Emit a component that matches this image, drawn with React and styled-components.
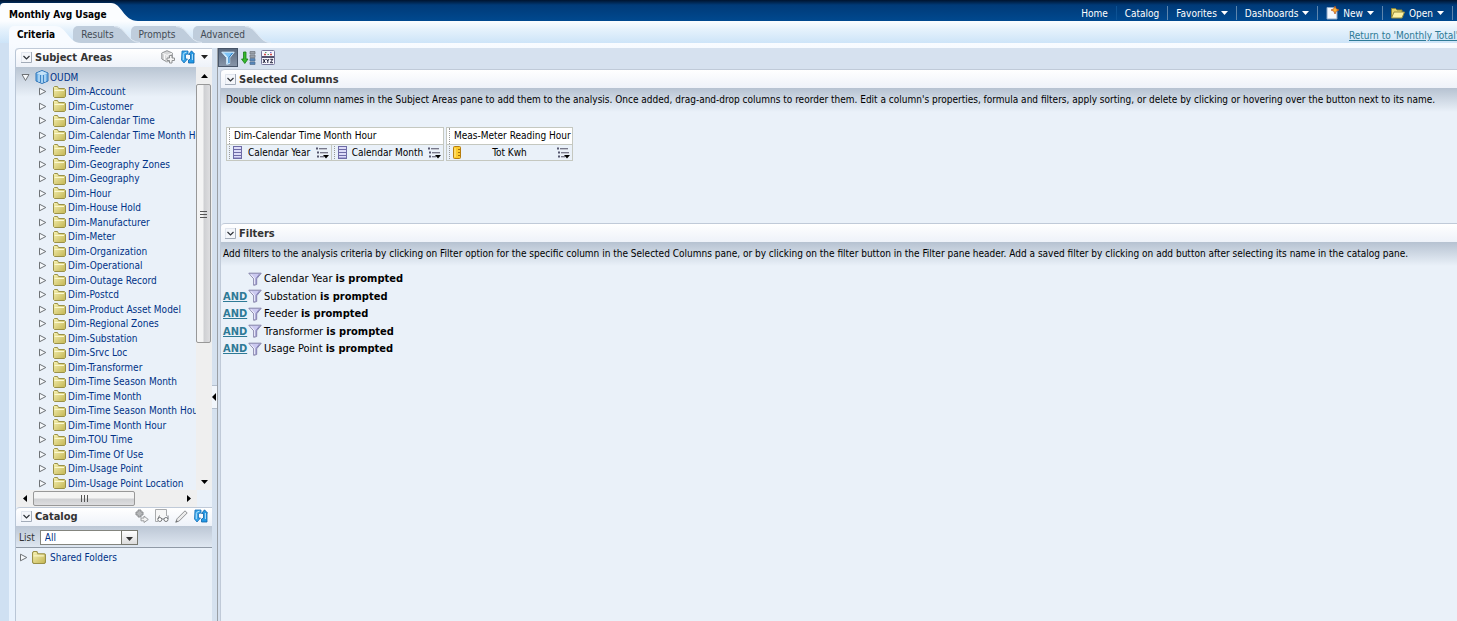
import { useState } from "react";
import styled, { createGlobalStyle, css } from "styled-components";

const dimensions = [
  "Dim-Account",
  "Dim-Customer",
  "Dim-Calendar Time",
  "Dim-Calendar Time Month Hour",
  "Dim-Feeder",
  "Dim-Geography Zones",
  "Dim-Geography",
  "Dim-Hour",
  "Dim-House Hold",
  "Dim-Manufacturer",
  "Dim-Meter",
  "Dim-Organization",
  "Dim-Operational",
  "Dim-Outage Record",
  "Dim-Postcd",
  "Dim-Product Asset Model",
  "Dim-Regional Zones",
  "Dim-Substation",
  "Dim-Srvc Loc",
  "Dim-Transformer",
  "Dim-Time Season Month",
  "Dim-Time Month",
  "Dim-Time Season Month Hour",
  "Dim-Time Month Hour",
  "Dim-TOU Time",
  "Dim-Time Of Use",
  "Dim-Usage Point",
  "Dim-Usage Point Location",
];

const filters = ["Calendar Year", "Substation", "Feeder", "Transformer", "Usage Point"];

const tabs = ["Criteria", "Results", "Prompts", "Advanced"];

function FolderIcon({ size = 13 }) {
  return (
    <svg width={size} height={size - 1} viewBox="0 0 13 12" aria-hidden="true">
      <defs>
        <linearGradient id="folder" x1="0" y1="0" x2="1" y2="1">
          <stop offset="0" stopColor="#f8f3b4" />
          <stop offset="1" stopColor="#c2b452" />
        </linearGradient>
      </defs>
      <path d="M0.5 10.5V1.5L1.5 0.5H4.5L5.5 2.5H11.5L12.5 3.5V10.5L11.5 11.5H1.5Z" fill="url(#folder)" stroke="#9a9148" />
      <path d="M1.5 4.5H11" stroke="#fbf8d0" />
    </svg>
  );
}

function Twisty({ open }) {
  return (
    <svg width="9" height="9" viewBox="0 0 9 9" aria-hidden="true">
      <path d={open ? "M1 1.5H8L4.5 7.5Z" : "M1.5 1.2V7.8L7.8 4.5Z"} fill="#f6f9fc" stroke="#6e7276" />
    </svg>
  );
}

function CubeIcon() {
  return (
    <svg width="14" height="14" viewBox="0 0 14 14" aria-hidden="true">
      <path d="M7 0.5L13 3V11L7 13.5L1 11V3Z" fill="#6fb0e6" stroke="#2f75b8" />
      <path d="M7 1L12.5 3.2L7 5.5L1.5 3.2Z" fill="#c4e2f8" />
      <path d="M7 5.5V13M4 4.5V12M10 4.5V12" stroke="#e0f1fd" />
      <path d="M5.5 5V12.5M8.5 5V12.5" stroke="#3e86c6" />
    </svg>
  );
}

function RefreshIcon() {
  return (
    <svg width="14" height="14" viewBox="0 0 14 14" aria-hidden="true">
      <path d="M1 1H7V4L4.5 4.5V9H6.5L3 13L0.5 10Z" fill="#35a4ea" stroke="#1670b8" strokeWidth="0.8" />
      <path d="M7.5 13H13V4H13.5L10.5 0.8L7.5 4.5H9.5V9L7.5 10Z" fill="#249ae6" stroke="#0d62a8" strokeWidth="0.8" />
      <path d="M2.3 10V4.5Q2.6 2.5 5.6 2.2M11.4 4V10" stroke="#b7e4fc" fill="none" />
    </svg>
  );
}

function AddSubjectIcon() {
  return (
    <svg width="14" height="14" viewBox="0 0 14 14" aria-hidden="true">
      <path d="M6 0.7L11.3 3V9L6 12L0.8 9V3Z" fill="#d7d8d9" stroke="#929496" />
      <path d="M1.5 3.3L6 5.4L11 3.2M6 5.4V11.5M3.5 4.5V10" stroke="#f9f9f9" fill="none" />
      <path d="M8.5 5.5H11V8H13.5V10.5H11V13H8.5V10.5H6V8H8.5Z" fill="#f4f4f4" stroke="#8e9092" />
    </svg>
  );
}

function FunnelIcon({ light }) {
  return (
    <svg width="14" height="14" viewBox="0 0 14 14" aria-hidden="true">
      <path
        d="M0.8 1.2H13.2L8.7 6.8V12.5L5.7 13.3V6.8Z"
        fill={light ? "#7cc3f6" : "#cbc9f0"}
        stroke={light ? "#d5eeff" : "#8583a8"}
      />
      <path d="M2.8 2.3L6.8 6.8V12" stroke={light ? "#e8f7ff" : "#f8f7ff"} fill="none" />
      <path d="M11.5 2L8 6.5V12" stroke={light ? "#2676bf" : "#8985bd"} fill="none" />
    </svg>
  );
}

function SortIcon() {
  return (
    <svg width="15" height="14" viewBox="0 0 15 14" aria-hidden="true">
      <path d="M2.5 1V8H0.5L3.8 12.5L7 8H5V1Z" fill="#35b82c" stroke="#167d18" strokeWidth="0.8" />
      <path d="M9 0.5H14V3H9ZM9 4H14V6.5H9Z" fill="#9aa1aa" stroke="#6d747d" strokeWidth="0.7" />
      <path d="M9 7.5H14V10H9ZM9 11H14V13.5H9Z" fill="#5586bd" stroke="#54708d" strokeWidth="0.7" />
    </svg>
  );
}

function FormulaIcon() {
  return (
    <svg width="14" height="15" viewBox="0 0 14 15" aria-hidden="true">
      <rect x="0.5" y="0.5" width="13" height="14" rx="1" fill="#f7f6fd" stroke="#77769a" />
      <path d="M3 4.5H5M9 4.5H11" stroke="#ce4a4a" strokeWidth="1.5" />
      <path d="M4 2.5H5.5M6.5 4.5H8" stroke="#5c9e6b" />
      <path d="M9 2.5H10.5" stroke="#7a76c8" />
      <path d="M1 7H13" stroke="#55536f" strokeWidth="2" />
      <path d="M2 9L4.4 13M4.4 9L2 13M5.5 9L6.8 11L8 9M6.8 11V13M9.3 9.3H11.8L9.3 12.7H12" stroke="#23233c" fill="none" />
    </svg>
  );
}

function CollapseIcon() {
  return (
    <svg width="11" height="11" viewBox="0 0 11 11" aria-hidden="true">
      <rect width="11" height="11" fill="#f4f6fa" />
      <path d="M0 10.5H10.5V0" stroke="#a2abb8" fill="none" />
      <path d="M0.5 10V0.5H10" stroke="#e1e6ee" fill="none" />
      <path d="M2.5 4L5.5 7L8.5 4" stroke="#2e3238" fill="none" strokeWidth="1.2" />
    </svg>
  );
}

function Caret() {
  return (
    <svg width="7" height="4" viewBox="0 0 7 4" aria-hidden="true">
      <path d="M0 0H7L3.5 4Z" fill="currentColor" />
    </svg>
  );
}

function AttributeIcon({ measure }) {
  return measure ? (
    <svg width="9" height="13" viewBox="0 0 9 13" aria-hidden="true">
      <rect x="0.5" y="0.5" width="7" height="12" rx="1" fill="#fccb2e" stroke="#b67d0e" />
      <path d="M2 2V11" stroke="#ffec9c" />
      <path d="M5 3.5H7M5 6.5H7M5 9.5H7" stroke="#a66f08" />
    </svg>
  ) : (
    <svg width="9" height="13" viewBox="0 0 9 13" aria-hidden="true">
      <rect x="0.5" y="0.5" width="8" height="12" fill="#dddcf8" stroke="#6e6ba6" />
      <path d="M1 3.5H8M1 6.5H8M1 9.5H8" stroke="#6e6ba6" />
      <path d="M1 11.5H8" stroke="#aaa7d8" />
    </svg>
  );
}

function OptionsIcon() {
  return (
    <svg width="13" height="12" viewBox="0 0 13 12" aria-hidden="true">
      <path d="M0 1.5H2M1 5.5H3M1 9.5H3" stroke="#55566e" strokeWidth="2" />
      <path d="M3 1.5H11M4 5.5H12M4 9.5H8" stroke="#77788a" strokeWidth="1" />
      <path d="M3 2.5H11M4 6.5H12M4 10.5H8" stroke="#c3c6d0" strokeWidth="1" />
      <path d="M7 8H13L10 11.5Z" fill="#000" />
    </svg>
  );
}

function NewIcon() {
  return (
    <svg width="13" height="14" viewBox="0 0 13 14" aria-hidden="true">
      <path d="M1 1.5H8L11 4.5V13H1Z" fill="#f4f8fd" stroke="#8aa7c8" />
      <path d="M9 0L10.2 2.8L13 4L10.2 5.2L9 8L7.8 5.2L5 4L7.8 2.8Z" fill="#ffb733" stroke="#b34c1c" strokeWidth="0.7" />
    </svg>
  );
}

function OpenIcon() {
  return (
    <svg width="14" height="12" viewBox="0 0 14 12" aria-hidden="true">
      <path d="M0.5 10.5V1.5H4.5L6 3H11V5" fill="#e5d66e" stroke="#8d8437" />
      <path d="M0.5 11L3 5H13.5L11 11Z" fill="#fbf2a4" stroke="#978c3c" />
    </svg>
  );
}

function AddItemIcon() {
  return (
    <svg width="14" height="14" viewBox="0 0 14 14" aria-hidden="true">
      <path d="M3 1H6V3H8V6H6V8H3V6H1V3H3Z" fill="#b5b7b9" stroke="#8b8d90" />
      <path d="M6 9H9V7L13.3 10.5L9 13.5V11.8H6Z" fill="#f3f3f3" stroke="#9a9c9e" />
    </svg>
  );
}

function PreviewIcon() {
  return (
    <svg width="14" height="14" viewBox="0 0 14 14" aria-hidden="true">
      <path d="M0.5 12.5V0.5H11.5V7M0.5 12.5H3" fill="#f7f7f7" stroke="#a9abad" />
      <circle cx="4.8" cy="10.5" r="2" fill="#fff" stroke="#77797c" />
      <circle cx="11" cy="10.5" r="2" fill="#fff" stroke="#77797c" />
      <path d="M6.8 10H9M3 10L4.5 6.5M13 10V6.5" stroke="#77797c" fill="none" />
    </svg>
  );
}

function PencilIcon() {
  return (
    <svg width="13" height="13" viewBox="0 0 13 13" aria-hidden="true">
      <path d="M0.8 12.2L2 8.8L10 0.8L12.2 3L4.2 11Z" fill="#ececec" stroke="#8f9193" />
      <path d="M0.5 12.5L3 11.5L1.5 10Z" fill="#707274" />
    </svg>
  );
}

function Section({ title, actions }) {
  return (
    <SectionHeader>
      <IconButton aria-label={`Collapse ${title}`}>
        <CollapseIcon />
      </IconButton>
      <h2>{title}</h2>
      {actions && <Actions>{actions}</Actions>}
    </SectionHeader>
  );
}

function Column({ name, width, measure }) {
  return (
    <ColumnCell $width={width}>
      <AttributeIcon measure={measure} />
      <span>{name}</span>
      <IconButton aria-label={`${name} options`}>
        <OptionsIcon />
      </IconButton>
    </ColumnCell>
  );
}

function App() {
  const [activeTab, setActiveTab] = useState("Criteria");
  const [list, setList] = useState("All");

  return (
    <Page>
      <GlobalStyle />
      <TopBar>
        <DocTitle>
          Monthly Avg Usage
          <svg width="27" height="18" viewBox="0 0 27 18" aria-hidden="true">
            <path d="M0 0C11 0 12 18 27 18H0Z" fill="#fbfdff" />
          </svg>
        </DocTitle>
        <Nav>
          <a href="#home">Home</a>
          <a href="#catalog">Catalog</a>
          <a href="#favorites">Favorites <Caret /></a>
          <a href="#dashboards">Dashboards <Caret /></a>
          <a href="#new"><NewIcon /> New <Caret /></a>
          <a href="#open"><OpenIcon /> Open <Caret /></a>
        </Nav>
      </TopBar>

      <TabBar>
        {tabs.map((tab) => (
          <Tab key={tab} $active={tab === activeTab} onClick={() => setActiveTab(tab)}>
            {tab}
            <svg width="26" height="17" viewBox="0 0 26 17" aria-hidden="true">
              <path d="M0 0C12 0 13 17 26 17H0Z" fill={tab === activeTab ? "#f8fbff" : "#bfcddc"} />
              {tab !== activeTab && <path d="M0 0.5C12 0.5 13 16.5 26 16.5" fill="none" stroke="#dfe8f2" />}
            </svg>
          </Tab>
        ))}
        <ReturnLink href="#return">Return to 'Monthly Total'</ReturnLink>
      </TabBar>

      <Frame>
        <Sidebar>
          <Section
            title="Subject Areas"
            actions={
              <>
                <IconButton aria-label="Add subject area"><AddSubjectIcon /></IconButton>
                <IconButton aria-label="Refresh subject areas"><RefreshIcon /></IconButton>
                <IconButton aria-label="More"><Caret /></IconButton>
              </>
            }
          />
          <TreePane>
            <Tree>
              <TreeRow $root>
                <IconButton aria-label="Collapse OUDM"><Twisty open /></IconButton>
                <CubeIcon />
                <span>OUDM</span>
              </TreeRow>
              {dimensions.map((name) => (
                <TreeRow key={name}>
                  <IconButton aria-label={`Expand ${name}`}><Twisty /></IconButton>
                  <FolderIcon />
                  <span>{name}</span>
                </TreeRow>
              ))}
            </Tree>
            <ScrollBar>
              <ScrollArrow aria-label="Scroll up"><svg width="7" height="4"><path d="M0 4H7L3.5 0Z" /></svg></ScrollArrow>
              <ScrollThumb><i /><i /><i /></ScrollThumb>
              <ScrollArrow aria-label="Scroll down"><svg width="7" height="4"><path d="M0 0H7L3.5 4Z" /></svg></ScrollArrow>
            </ScrollBar>
          </TreePane>
          <ScrollBar $horizontal>
            <ScrollArrow aria-label="Scroll left"><svg width="4" height="7"><path d="M4 0V7L0 3.5Z" /></svg></ScrollArrow>
            <ScrollThumb $horizontal><i /><i /><i /></ScrollThumb>
            <ScrollArrow aria-label="Scroll right"><svg width="4" height="7"><path d="M0 0V7L4 3.5Z" /></svg></ScrollArrow>
          </ScrollBar>

          <Section
            title="Catalog"
            actions={
              <>
                <IconButton aria-label="Add"><AddItemIcon /></IconButton>
                <IconButton aria-label="Preview"><PreviewIcon /></IconButton>
                <IconButton aria-label="Edit"><PencilIcon /></IconButton>
                <IconButton aria-label="Refresh catalog"><RefreshIcon /></IconButton>
              </>
            }
          />
          <ListBar>
            <label htmlFor="list">List</label>
            <SelectBox>
              <select id="list" value={list} onChange={(e) => setList(e.target.value)}>
                <option>All</option>
                <option>Filters</option>
              </select>
              <SelectArrow><Caret /></SelectArrow>
            </SelectBox>
          </ListBar>
          <CatalogRow>
            <IconButton aria-label="Expand Shared Folders"><Twisty /></IconButton>
            <FolderIcon size={14} />
            <span>Shared Folders</span>
          </CatalogRow>
        </Sidebar>

        <Splitter>
          <button aria-label="Hide pane">
            <svg width="4" height="8" viewBox="0 0 4 8"><path d="M4 0V8L0 4Z" /></svg>
          </button>
        </Splitter>

        <Main>
          <Toolbar>
            <ToolButton $pressed aria-label="Filters"><FunnelIcon light /></ToolButton>
            <ToolButton aria-label="Sort"><SortIcon /></ToolButton>
            <ToolButton aria-label="Formulas"><FormulaIcon /></ToolButton>
          </Toolbar>
          <Panel>
            <Section title="Selected Columns" />
            <ColumnsBody>
              <p>
                Double click on column names in the Subject Areas pane to add them to the analysis. Once added,
                drag-and-drop columns to reorder them. Edit a column's properties, formula and filters, apply sorting,
                or delete by clicking or hovering over the button next to its name.
              </p>
              <ColumnGroups>
                <ColumnGroup>
                  <h3>Dim-Calendar Time Month Hour</h3>
                  <div>
                    <Column name="Calendar Year" width={104} />
                    <Column name="Calendar Month" width={112} />
                  </div>
                </ColumnGroup>
                <ColumnGroup>
                  <h3>Meas-Meter Reading Hour</h3>
                  <div>
                    <Column name="Tot Kwh" width={125} measure />
                  </div>
                </ColumnGroup>
              </ColumnGroups>
            </ColumnsBody>
            <Section title="Filters" />
            <FiltersBody>
              <p>
                Add filters to the analysis criteria by clicking on Filter option for the specific column in the
                Selected Columns pane, or by clicking on the filter button in the Filter pane header. Add a saved filter
                by clicking on add button after selecting its name in the catalog pane.
              </p>
              <ul>
                {filters.map((name, i) => (
                  <FilterRow key={name}>
                    <Operator>{i > 0 && <a href="#and">AND</a>}</Operator>
                    <FunnelIcon />
                    <span>
                      {name} <b>is prompted</b>
                    </span>
                  </FilterRow>
                ))}
              </ul>
            </FiltersBody>
          </Panel>
        </Main>
      </Frame>
    </Page>
  );
}

const GlobalStyle = createGlobalStyle`
  * {
    box-sizing: border-box;
  }
  body {
    margin: 0;
    background: #cfe0f2;
    font-family: Tahoma, "DejaVu Sans Condensed", "DejaVu Sans", sans-serif;
    font-size: 10px;
    color: #000;
  }
  button, select {
    font: inherit;
  }
  svg {
    display: block;
    flex: none;
  }
  h2, h3, p, ul {
    margin: 0;
    padding: 0;
  }
`;

const Page = styled.div`
  min-height: 100vh;
  display: flex;
  flex-direction: column;
  overflow: hidden;
`;

const TopBar = styled.header`
  display: flex;
  align-items: flex-end;
  height: 21px;
  background: linear-gradient(#00142f, #003a78 5px, #00498f);
`;

const DocTitle = styled.h1`
  position: relative;
  margin: 0;
  height: 18px;
  padding: 0 4px 0 9px;
  font-size: 10px;
  line-height: 24px;
  background: #fbfdff;
  border-top-left-radius: 4px;
  svg {
    position: absolute;
    left: 100%;
    bottom: 0;
  }
`;

const Nav = styled.nav`
  display: flex;
  margin-left: auto;
  padding-right: 4px;
  a {
    display: flex;
    align-items: center;
    gap: 4px;
    height: 14px;
    margin-bottom: 1px;
    padding: 0 8px;
    color: #fff;
    text-decoration: none;
    white-space: nowrap;
    border-right: 1px solid #5d85ad;
  }
  a:first-child {
    border-color: #0d5294;
  }
`;

const TabBar = styled.div`
  display: flex;
  align-items: flex-end;
  height: 22px;
  padding-left: 9px;
  background: linear-gradient(#fbfdff, #e6f2fc 8px, #cde4f8);
`;

const Tab = styled.button`
  position: relative;
  height: 17px;
  margin-right: 17px;
  padding: 0 0 0 8px;
  border: 0;
  border-top-left-radius: 5px;
  background: #bfcddc;
  color: #434b55;
  text-align: left;
  white-space: nowrap;
  svg {
    position: absolute;
    left: 100%;
    top: 0;
    z-index: 1;
  }
  ${(props) =>
    props.$active &&
    css`
      margin-right: 18px;
      background: #f8fbff;
      color: #000;
      font-weight: 700;
    `}
`;

const ReturnLink = styled.a`
  width: 108px;
  height: 13px;
  margin-left: auto;
  color: #2e7a96;
  white-space: nowrap;
  overflow: hidden;
`;

const Frame = styled.div`
  display: flex;
  flex: 1;
  margin-left: 9px;
  padding: 5px 0 0 6px;
  background: linear-gradient(#f8fbff, #e8f2fd 40px);
`;

const SectionHeader = styled.div`
  display: flex;
  align-items: center;
  gap: 3px;
  height: 19px;
  padding: 0 4px;
  background: linear-gradient(#fff, #eef2f9);
  border-top: 1px solid #c0cad8;
  border-top-left-radius: 4px;
  h2 {
    font-size: 11px;
    color: #333;
    white-space: nowrap;
  }
`;

const Sidebar = styled.aside`
  display: flex;
  flex-direction: column;
  width: 197px;
  flex: none;
  border-left: 1px solid #b9c6d6;
  border-top-left-radius: 4px;
  background: #eaf1f9;
  ${SectionHeader} {
    padding: 0 4px 2px 5px;
  }
`;

const Actions = styled.div`
  display: flex;
  align-items: center;
  gap: 6px;
  margin-left: auto;
`;

const IconButton = styled.button`
  display: flex;
  flex: none;
  padding: 0;
  border: 0;
  background: none;
  color: #222;
`;

const TreePane = styled.div`
  display: flex;
  height: 423px;
`;

const Tree = styled.div`
  flex: 1;
  min-width: 0;
  overflow: hidden;
  padding-top: 3px;
  background: linear-gradient(#b9c5d3, #eaf1f9 30px);
`;

const TreeRow = styled.div`
  display: flex;
  align-items: center;
  gap: 6px;
  height: 15px;
  padding-left: 22px;
  color: #003286;
  white-space: nowrap;
  span {
    margin-left: -4px;
  }
  &:nth-child(odd) {
    height: 14px;
  }
  ${(props) =>
    props.$root &&
    css`
      gap: 5px;
      padding-left: 5px;
    `}
`;

const ScrollBar = styled.div`
  display: flex;
  flex-direction: ${(props) => (props.$horizontal ? "row" : "column")};
  ${(props) => (props.$horizontal ? "height: 17px; width: 181px;" : "width: 16px;")}
  flex: none;
  background: #efefef;
  button:last-child {
    ${(props) => (props.$horizontal ? "margin-left: auto;" : "margin-top: auto;")}
  }
`;

const ScrollArrow = styled.button`
  display: flex;
  align-items: center;
  justify-content: center;
  width: 17px;
  height: 17px;
  padding: 0;
  border: 0;
  background: none;
`;

const ScrollThumb = styled.div`
  display: flex;
  flex-direction: column;
  align-items: center;
  justify-content: center;
  gap: 1px;
  width: 15px;
  height: 259px;
  border: 1px solid #989898;
  border-radius: 2px;
  background: linear-gradient(90deg, #f4f4f4 45%, #cfd0d3 55%, #dedee0);
  i {
    width: 7px;
    height: 2px;
    border-bottom: 1px solid #555;
  }
  ${(props) =>
    props.$horizontal &&
    css`
      flex-direction: row;
      width: 102px;
      height: 15px;
      margin-top: 1px;
      background: linear-gradient(#f4f4f4 45%, #cfd0d3 55%, #dedee0);
      i {
        width: 2px;
        height: 7px;
        border: 0;
        border-right: 1px solid #555;
      }
    `}
`;

const ListBar = styled.div`
  display: flex;
  align-items: center;
  gap: 5px;
  height: 22px;
  padding: 1px 0 0 3px;
  color: #333;
  background: linear-gradient(#bcc7d5, #dfe7f1);
  border-bottom: 1px solid #909aa6;
`;

const SelectBox = styled.div`
  position: relative;
  select {
    display: block;
    width: 98px;
    height: 15px;
    padding: 0 4px;
    border: 1px solid #84857e;
    border-radius: 0;
    background: #fff;
    color: #003286;
    appearance: none;
  }
`;

const SelectArrow = styled.span`
  position: absolute;
  top: 0;
  right: 0;
  display: flex;
  align-items: flex-end;
  justify-content: center;
  width: 17px;
  height: 15px;
  padding-bottom: 3px;
  border: 1px solid #77786f;
  background: linear-gradient(#fff, #dcdcdc);
  pointer-events: none;
`;

const CatalogRow = styled.div`
  display: flex;
  align-items: center;
  gap: 4px;
  height: 19px;
  padding-left: 3px;
  color: #003286;
`;

const Splitter = styled.div`
  display: flex;
  flex: none;
  width: 6px;
  background: #d5e1ef;
  border-right: 1px solid #9a9fa5;
  button {
    display: flex;
    align-items: center;
    width: 5px;
    height: 24px;
    margin-top: 337px;
    padding: 0;
    border: 1px solid #b3bfce;
    border-width: 1px 0;
    background: #f1f6fc;
  }
`;

const Main = styled.main`
  display: flex;
  flex-direction: column;
  flex: 1;
  min-width: 0;
  background: #d6e1ef;
`;

const Toolbar = styled.div`
  display: flex;
  height: 21px;
`;

const ToolButton = styled.button`
  display: flex;
  align-items: center;
  justify-content: center;
  width: 20px;
  height: 19px;
  padding: 0;
  border: 0;
  background: none;
  ${(props) =>
    props.$pressed &&
    css`
      background: linear-gradient(#59697f, #8795a8);
      border: 1px solid #475569;
    `}
`;

const Panel = styled.div`
  flex: 1;
  margin-left: 2px;
  border-left: 1px solid #c0cad8;
  border-top-left-radius: 4px;
  background: #eaf1f9;
`;

const ColumnsBody = styled.section`
  height: 135px;
  padding: 0 5px;
  background: linear-gradient(#b6c2d1, #eaf1f9 24px);
  p {
    height: 39px;
    padding-top: 6px;
    white-space: nowrap;
  }
`;

const ColumnGroups = styled.div`
  display: flex;
  gap: 2px;
`;

const ColumnGroup = styled.div`
  border: 1px solid #c5c8c0;
  background: #fff;
  h3 {
    height: 16px;
    padding: 0 1px 0 4px;
    margin-left: 2px;
    border-left: 1px dotted #999;
    font-size: 10px;
    font-weight: 400;
    line-height: 16px;
    white-space: nowrap;
  }
  > div {
    display: flex;
  }
`;

const ColumnCell = styled.div`
  display: flex;
  align-items: center;
  width: ${(props) => props.$width}px;
  height: 16px;
  padding: 0 2px;
  border: 0 solid #c5c8c0;
  border-top-width: 1px;
  background: #eaf1f9;
  white-space: nowrap;
  &::before {
    content: "";
    height: 13px;
    margin-right: 3px;
    border-left: 1px dotted #999;
  }
  & + & {
    border-left-width: 1px;
  }
  span {
    flex: 1;
    text-align: center;
  }
`;

const FiltersBody = styled.section`
  padding: 0 2px;
  background: linear-gradient(#b6c2d1, #eaf1f9 24px);
  p {
    height: 28px;
    padding-top: 6px;
    white-space: nowrap;
  }
  ul {
    list-style: none;
  }
`;

const FilterRow = styled.li`
  display: flex;
  align-items: center;
  gap: 2px;
  height: 17px;
  font-size: 11px;
  white-space: nowrap;
  &:nth-child(even) {
    height: 18px;
  }
`;

const Operator = styled.span`
  width: 23px;
  a {
    color: #2e7a96;
    font-weight: 700;
  }
`;

export default App;
